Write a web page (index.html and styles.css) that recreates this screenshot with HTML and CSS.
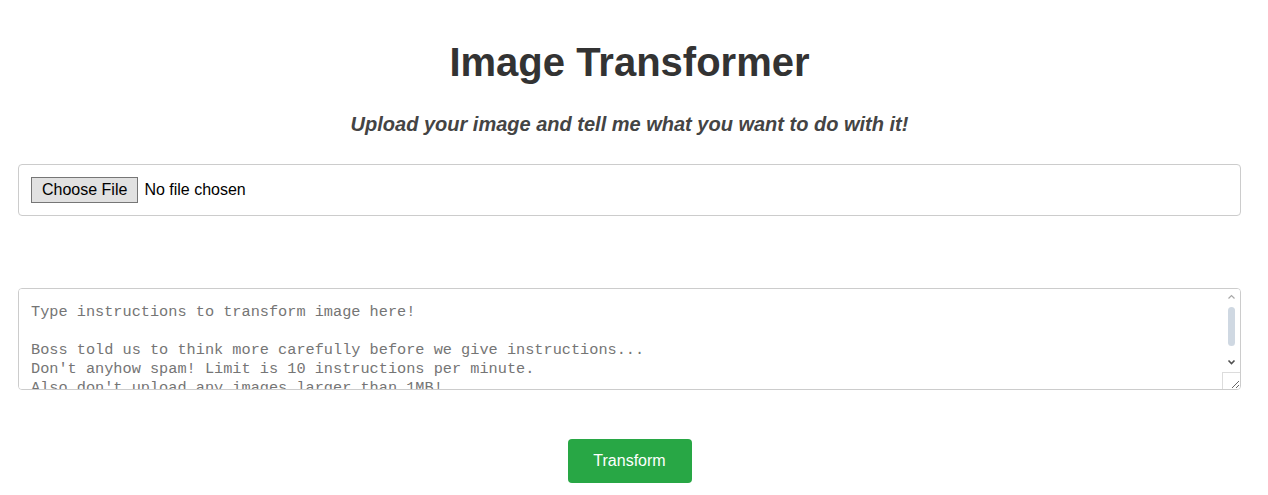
FILE: index.html
```html
<!DOCTYPE html>
<html lang="en">
<head>
    <meta charset="UTF-8">
    <meta name="viewport" content="width=device-width, initial-scale=1.0">
    <title>Image Transformer</title>
    <link rel="stylesheet" href="styles.css">
</head>
<body>
    <div class="container">
        <h1 class="title">Image Transformer</h1>
        <p class="subtitle">Upload your image and tell me what you want to do with it!</p>
        <div class="upload-box">
            <input type="file" id="imageInput" accept="image/*">
        </div>
        <div class="editor">
            <textarea id="instructions" rows="4">Type instructions to transform image here!

Boss told us to think more carefully before we give instructions...
Don't anyhow spam! Limit is 10 instructions per minute.
Also don't upload any images larger than 1MB!</textarea>
            <!-- scrollbar drawn on top, the browser hides the real one -->
            <div class="fake-scroll">
                <svg class="arrow" width="17" height="16" viewBox="0 0 17 16"><path d="M5.5 9.5L8.5 6.5L11.5 9.5" fill="none" stroke="#a8a8a8" stroke-width="1.2"/></svg>
                <div class="thumb"></div>
                <svg class="arrow down" width="17" height="16" viewBox="0 0 17 16"><path d="M5.5 6.5L8.5 9.5L11.5 6.5" fill="none" stroke="#505050" stroke-width="1.6"/></svg>
                <div class="corner"></div>
            </div>
        </div>
        <div class="actions">
            <button id="transformButton">Transform</button>
        </div>
    </div>
</body>
</html>
```

FILE: styles.css
```css
body {
    font-family: "Liberation Sans", Arial, sans-serif;
    margin: 0;
    color: #333;
    background: #fff;
}
.container {
    margin: 0 27px 0 18px; /* left edge at 18px */
    padding-top: 39px;
}
.title {
    font-size: 40px;
    font-weight: bold;
    text-align: center;
    margin: 0;
    line-height: 46px;
    color: #333;
}
.subtitle {
    font-size: 20px;
    font-weight: bold;
    font-style: italic;
    text-align: center;
    margin: 28px 0 28px;
    line-height: 23px;
    color: #444;
}
.upload-box {
    border: 1px solid #ccc;
    border-radius: 4px;
    padding: 12px;
    height: 26px;
    display: flex;
    align-items: center;
}
.upload-box input {
    font-family: "Liberation Sans", Arial, sans-serif;
    font-size: 16px;
    color: #000;
}
.upload-box input::file-selector-button {
    font-family: "Liberation Sans", Arial, sans-serif;
    font-size: 16px;
    height: 26px;
    padding: 0 10px;
    margin-right: 6px;
    background: #e1e1e1;
    border: 1px solid #767676;
    border-radius: 0;
    color: #000;
}
.editor {
    position: relative;
    margin-top: 72px;
}
textarea {
    display: block;
    box-sizing: border-box;
    width: 100%;
    height: 102px;
    padding: 14px 30px 10px 12px;
    border: 1px solid #ccc;
    border-radius: 4px;
    font-family: "Liberation Mono", "Courier New", monospace;
    font-size: 15.25px;
    line-height: 19px;
    color: #757575;
    overflow-y: scroll;
}
.fake-scroll {
    position: absolute;
    top: 1px;
    right: 1px;
    bottom: 1px;
    width: 18px;
    display: flex;
    flex-direction: column;
    align-items: center;
    pointer-events: none;
}
.arrow {
    display: block;
    flex: none;
}
.thumb {
    width: 7px;
    height: 39px;
    margin: 2px 0 8px;
    border-radius: 4px;
    background: #cfd8e2;
}
.corner {
    margin-top: auto;
    align-self: stretch;
    height: 17px;
    border-left: 1px solid #dcdcdc;
    border-top: 1px solid #dcdcdc;
    box-sizing: border-box;
}
.actions {
    display: flex;
    justify-content: center;
    margin-top: 49px;
}
#transformButton {
    background-color: #28a745;
    color: #fff;
    border: none;
    border-radius: 4px;
    width: 124px;
    height: 44px;
    font-family: "Liberation Sans", Arial, sans-serif;
    font-size: 16px;
    cursor: pointer;
}
#transformButton:hover {
    background-color: #218838;
}
```
